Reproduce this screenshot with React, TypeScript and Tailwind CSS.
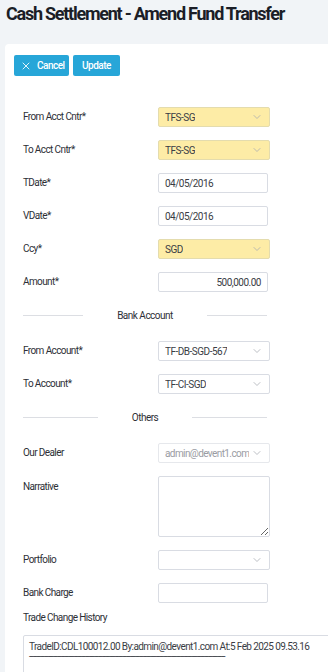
import React from 'react';
import { X, ChevronDown } from 'lucide-react';

const font = { fontFamily: 'Roboto, "Liberation Sans", sans-serif' };

const Label = ({ children, top }: { children: React.ReactNode; top?: boolean }) => (
  <div className={`w-[135px] shrink-0 text-[10px] tracking-[-0.6px] text-[#2d2f36] leading-5 ${top ? 'self-start pt-[1px]' : ''}`}>
    {children}
  </div>
);

const Select = ({ value, yellow, disabled }: { value: string; yellow?: boolean; disabled?: boolean }) => (
  <div
    className={`w-[112px] h-5 rounded-[2px] border flex items-center justify-between pl-[6px] pr-[6px] text-[10px] tracking-[-0.5px] ${
      yellow ? 'bg-[#fdeca6] border-[#e4dcae] text-[#3a3d45]' : 'bg-white border-[#d9dce3] text-[#3a3d45]'
    } ${disabled ? '!text-[#9a9ca3] !border-[#e6e8ec] tracking-[-0.6px]' : ''}`}
  >
    <span className="whitespace-nowrap overflow-hidden">{value}</span>
    <ChevronDown className="h-3 w-3 text-[#a6a9b0] shrink-0" strokeWidth={1.5} />
  </div>
);

const Input = ({ value, right }: { value?: string; right?: boolean }) => (
  <div
    className={`w-[110px] h-5 rounded-[2px] border border-[#d9dce3] bg-white flex items-center px-[6px] text-[10px] tracking-[-0.5px] text-[#3a3d45] ${
      right ? 'justify-end' : ''
    }`}
  >
    {value}
  </div>
);

const Row = ({ label, children }: { label: string; children: React.ReactNode }) => (
  <div className="flex items-center">
    <Label>{label}</Label>
    {children}
  </div>
);

const Divider = ({ title }: { title: string }) => (
  <div className="flex items-center h-5 w-[244px] mb-[3px]">
    <div className="flex-1 h-px bg-[#dcdee3]" />
    <span className="px-[34px] text-[10px] tracking-[-0.5px] text-[#2d2f36]">{title}</span>
    <div className="flex-1 h-px bg-[#dcdee3]" />
  </div>
);

export default function App() {
  return (
    <div className="w-[328px] h-[672px] overflow-hidden bg-[#f1f4f7]" style={font}>
      <h1 className="pl-[6px] pt-[2px] h-[44px] text-[18px] tracking-[-1.25px] font-bold text-[#1b1e27] leading-6">
        Cash Settlement - Amend Fund Transfer
      </h1>
      <div className="ml-[5px] w-[420px] bg-white rounded-tl-[4px] pl-[9px] pt-[11px] pb-6">
        <div className="flex gap-1">
          <button className="h-[21px] w-[55px] pl-[6px] flex items-center gap-[5px] rounded-[2px] bg-[#27a6d8] text-white text-[10px] tracking-[-0.5px] font-medium">
            <X className="h-3 w-3" strokeWidth={1.75} />
            Cancel
          </button>
          <button className="h-[21px] w-[47px] flex items-center justify-center rounded-[2px] bg-[#27a6d8] text-white text-[10px] tracking-[-0.5px] font-medium">
            Update
          </button>
        </div>

        <div className="pl-[9px] mt-[31px] flex flex-col gap-[13px]">
          <Row label="From Acct Cntr*"><Select value="TFS-SG" yellow /></Row>
          <Row label="To Acct Cntr*"><Select value="TFS-SG" yellow /></Row>
          <Row label="TDate*"><Input value="04/05/2016" /></Row>
          <Row label="VDate*"><Input value="04/05/2016" /></Row>
          <Row label="Ccy*"><Select value="SGD" yellow /></Row>
          <Row label="Amount*"><Input value="500,000.00" right /></Row>
          <Divider title="Bank Account" />
          <Row label="From Account*"><Select value="TF-DB-SGD-567" /></Row>
          <Row label="To Account*"><Select value="TF-CI-SGD" /></Row>
          <Divider title="Others" />
          <Row label="Our Dealer"><Select value="admin@devent1.com" disabled /></Row>
          <div className="flex">
            <Label top>Narrative</Label>
            <textarea className="w-[112px] h-[61px] rounded-[2px] border border-[#d9dce3] bg-white outline-none" />
          </div>
          <Row label="Portfolio"><Select value="" /></Row>
          <Row label="Bank Charge"><Input /></Row>
          <div className="-mt-[6px]">
            <div className="text-[10px] tracking-[-0.6px] text-[#2d2f36] leading-4">Trade Change History</div>
            <div className="mt-[9px] w-[360px] h-[60px] rounded-l-[2px] border border-[#d9dce3] px-[5px] pt-[5px] text-[10px] tracking-[-0.6px] text-[#3a3d45] leading-[12px] whitespace-nowrap">
              <div>TradeID:CDL100012.00 By:admin@devent1.com At:5 Feb 2025 09.53.16</div>
              <div className="leading-[8px] tracking-[-0.9px]">
                ---------------------------------------------------------------------------------------------------------
              </div>
            </div>
          </div>
        </div>
      </div>
    </div>
  );
}
